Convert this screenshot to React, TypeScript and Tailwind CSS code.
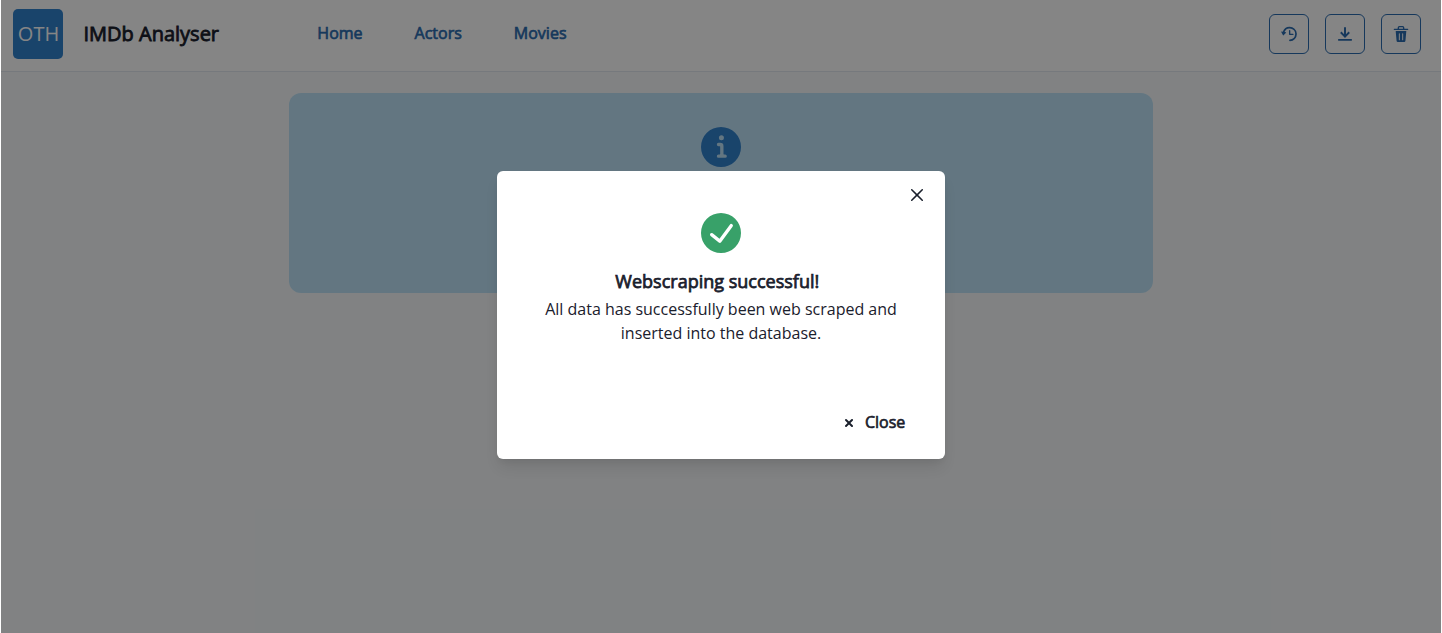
import type { ReactNode } from 'react';

const paths = {
  clockHand:
    'M12.965,6a1,1,0,0,0-1,1v5.5a1,1,0,0,0,1,1h5a1,1,0,0,0,0-2h-3.75a.25.25,0,0,1-.25-.25V7A1,1,0,0,0,12.965,6Z',
  clockRing:
    'M12.567,1.258A10.822,10.822,0,0,0,2.818,8.4a.25.25,0,0,1-.271.163L.858,8.309a.514.514,0,0,0-.485.213.509.509,0,0,0-.021.53l2.679,4.7a.5.5,0,0,0,.786.107l3.77-3.746a.5.5,0,0,0-.279-.85L5.593,9.007a.25.25,0,0,1-.192-.35,8.259,8.259,0,1,1,7.866,11.59,1.25,1.25,0,0,0,.045,2.5h.047a10.751,10.751,0,1,0-.792-21.487Z',
  download:
    'M11.2857,6.05714 L10.08571,4.85714 L7.85714,7.14786 L7.85714,1 L6.14286,1 L6.14286,7.14786 L3.91429,4.85714 L2.71429,6.05714 L7,10.42857 L11.2857,6.05714 Z M1,11.2857 L1,13 L13,13 L13,11.2857 L1,11.2857 Z',
  trash:
    'M19.452 7.5H4.547a.5.5 0 00-.5.545l1.287 14.136A2 2 0 007.326 24h9.347a2 2 0 001.992-1.819L19.95 8.045a.5.5 0 00-.129-.382.5.5 0 00-.369-.163zm-9.2 13a.75.75 0 01-1.5 0v-9a.75.75 0 011.5 0zm5 0a.75.75 0 01-1.5 0v-9a.75.75 0 011.5 0zM22 4h-4.75a.25.25 0 01-.25-.25V2.5A2.5 2.5 0 0014.5 0h-5A2.5 2.5 0 007 2.5v1.25a.25.25 0 01-.25.25H2a1 1 0 000 2h20a1 1 0 000-2zM9 3.75V2.5a.5.5 0 01.5-.5h5a.5.5 0 01.5.5v1.25a.25.25 0 01-.25.25h-5.5A.25.25 0 019 3.75z',
  info: 'M12,0A12,12,0,1,0,24,12,12.013,12.013,0,0,0,12,0Zm.25,5a1.5,1.5,0,1,1-1.5,1.5A1.5,1.5,0,0,1,12.25,5ZM14.5,18.5h-4a1,1,0,0,1,0-2h.75a.25.25,0,0,0,.25-.25v-4.5a.25.25,0,0,0-.25-.25H10.5a1,1,0,0,1,0-2h1a2,2,0,0,1,2,2v4.75a.25.25,0,0,0,.25.25h.75a1,1,0,1,1,0,2Z',
  check:
    'M12,0A12,12,0,1,0,24,12,12.014,12.014,0,0,0,12,0Zm6.927,8.2-6.845,9.289a1.011,1.011,0,0,1-1.43.188L5.764,13.769a1,1,0,1,1,1.25-1.562l4.076,3.261,6.227-8.451A1,1,0,1,1,18.927,8.2Z',
  close:
    'M.439,21.44a1.5,1.5,0,0,0,2.122,2.121L11.823,14.3a.25.25,0,0,1,.354,0l9.262,9.263a1.5,1.5,0,1,0,2.122-2.121L14.3,12.177a.25.25,0,0,1,0-.354l9.263-9.262A1.5,1.5,0,0,0,21.439.44L12.177,9.7a.25.25,0,0,1-.354,0L2.561.44A1.5,1.5,0,0,0,.439,2.561L9.7,11.823a.25.25,0,0,1,0,.354Z',
  smallClose:
    'M9.41 8l2.29-2.29c.19-.18.3-.43.3-.71a1.003 1.003 0 0 0-1.71-.71L8 6.59l-2.29-2.3a1.003 1.003 0 0 0-1.42 1.42L6.59 8 4.3 10.29c-.19.18-.3.43-.3.71a1.003 1.003 0 0 0 1.71.71L8 9.41l2.29 2.29c.18.19.43.3.71.3a1.003 1.003 0 0 0 .71-1.71L9.41 8z',
};

function Icon({ d, viewBox = '0 0 24 24', className }: { d: string[]; viewBox?: string; className: string }) {
  return (
    <svg viewBox={viewBox} className={className} fill="currentColor" fillRule="evenodd" aria-hidden="true">
      {d.map((p) => (
        <path key={p} d={p} />
      ))}
    </svg>
  );
}

function IconButton({ label, children }: { label: string; children: ReactNode }) {
  return (
    <button
      aria-label={label}
      className="flex size-10 items-center justify-center rounded-md border border-[#2b6cb0] text-[#2b6cb0]"
    >
      {children}
    </button>
  );
}

function NavBar() {
  return (
    <header className="flex h-18 items-center border-b border-[#e2e8f0] bg-white pr-5 pl-3">
      <div className="mb-[3px] flex size-[50px] items-center justify-center rounded-[5px] bg-[#3182ce] pl-px text-xl leading-none text-white">
        OTH
      </div>
      <h1 className="mb-1 ml-[20.5px] -translate-y-[0.4px] text-xl [-webkit-text-stroke:0.8px_currentColor]">
        IMDb Analyser
      </h1>
      <nav className="mb-1.5 ml-[98.3px] flex -translate-y-[0.4px] gap-[52px] text-base text-[#2b6cb0] [-webkit-text-stroke:0.65px_currentColor]">
        <a href="#home">Home</a>
        <a href="#actors">Actors</a>
        <a href="#movies">Movies</a>
      </nav>
      <div className="mb-[3px] ml-auto flex gap-4">
        <IconButton label="History">
          <Icon d={[paths.clockHand, paths.clockRing]} className="size-4" />
        </IconButton>
        <IconButton label="Download">
          <Icon d={[paths.download]} viewBox="0 0 14 14" className="size-4" />
        </IconButton>
        <IconButton label="Delete">
          <Icon d={[paths.trash]} className="size-4" />
        </IconButton>
      </div>
    </header>
  );
}

function SuccessDialog() {
  return (
    <div
      role="dialog"
      aria-modal="true"
      className="relative mt-[171px] flex h-72 w-md flex-col items-center rounded-md bg-white shadow-[0_10px_15px_-3px_rgba(0,0,0,0.1),0_4px_6px_-2px_rgba(0,0,0,0.05)]"
    >
      <button aria-label="Dismiss" className="absolute top-2 right-3 flex size-8 items-center justify-center">
        <Icon d={[paths.close]} className="size-3" />
      </button>
      <Icon d={[paths.check]} className="mt-[42px] size-10 shrink-0 text-[#38a169]" />
      <h2 className="mt-4 mr-[7.4px] -translate-y-[0.4px] text-lg leading-6 [-webkit-text-stroke:0.75px_currentColor]">
        Webscraping successful!
      </h2>
      <p className="mt-1 w-96 text-center text-base leading-6">
        All data has successfully been web scraped and inserted into the database.
      </p>
      <button className="mt-auto mr-[39.7px] mb-[25px] flex items-center gap-2 self-end text-base [-webkit-text-stroke:0.65px_currentColor]">
        <Icon d={[paths.smallClose]} viewBox="0 0 16 16" className="mt-0.5 size-4" />
        <span className="-translate-y-[0.4px] inline-block">Close</span>
      </button>
    </div>
  );
}

export default function App() {
  return (
    <div className="relative h-screen overflow-hidden bg-white px-px font-['Open_Sans',sans-serif] text-[#1a202c]">
      <div className="h-full bg-[#f7fafc]">
        <NavBar />
        <main className="flex justify-center pt-[21px]">
          <section className="flex h-[200px] w-[864px] justify-center rounded-xl bg-[#bee3f8] pt-[34px]">
            <Icon d={[paths.info]} className="size-10 text-[#3182ce]" />
          </section>
        </main>
      </div>
      <div className="absolute inset-x-px inset-y-0 flex items-start justify-center bg-black/48">
        <SuccessDialog />
      </div>
    </div>
  );
}
